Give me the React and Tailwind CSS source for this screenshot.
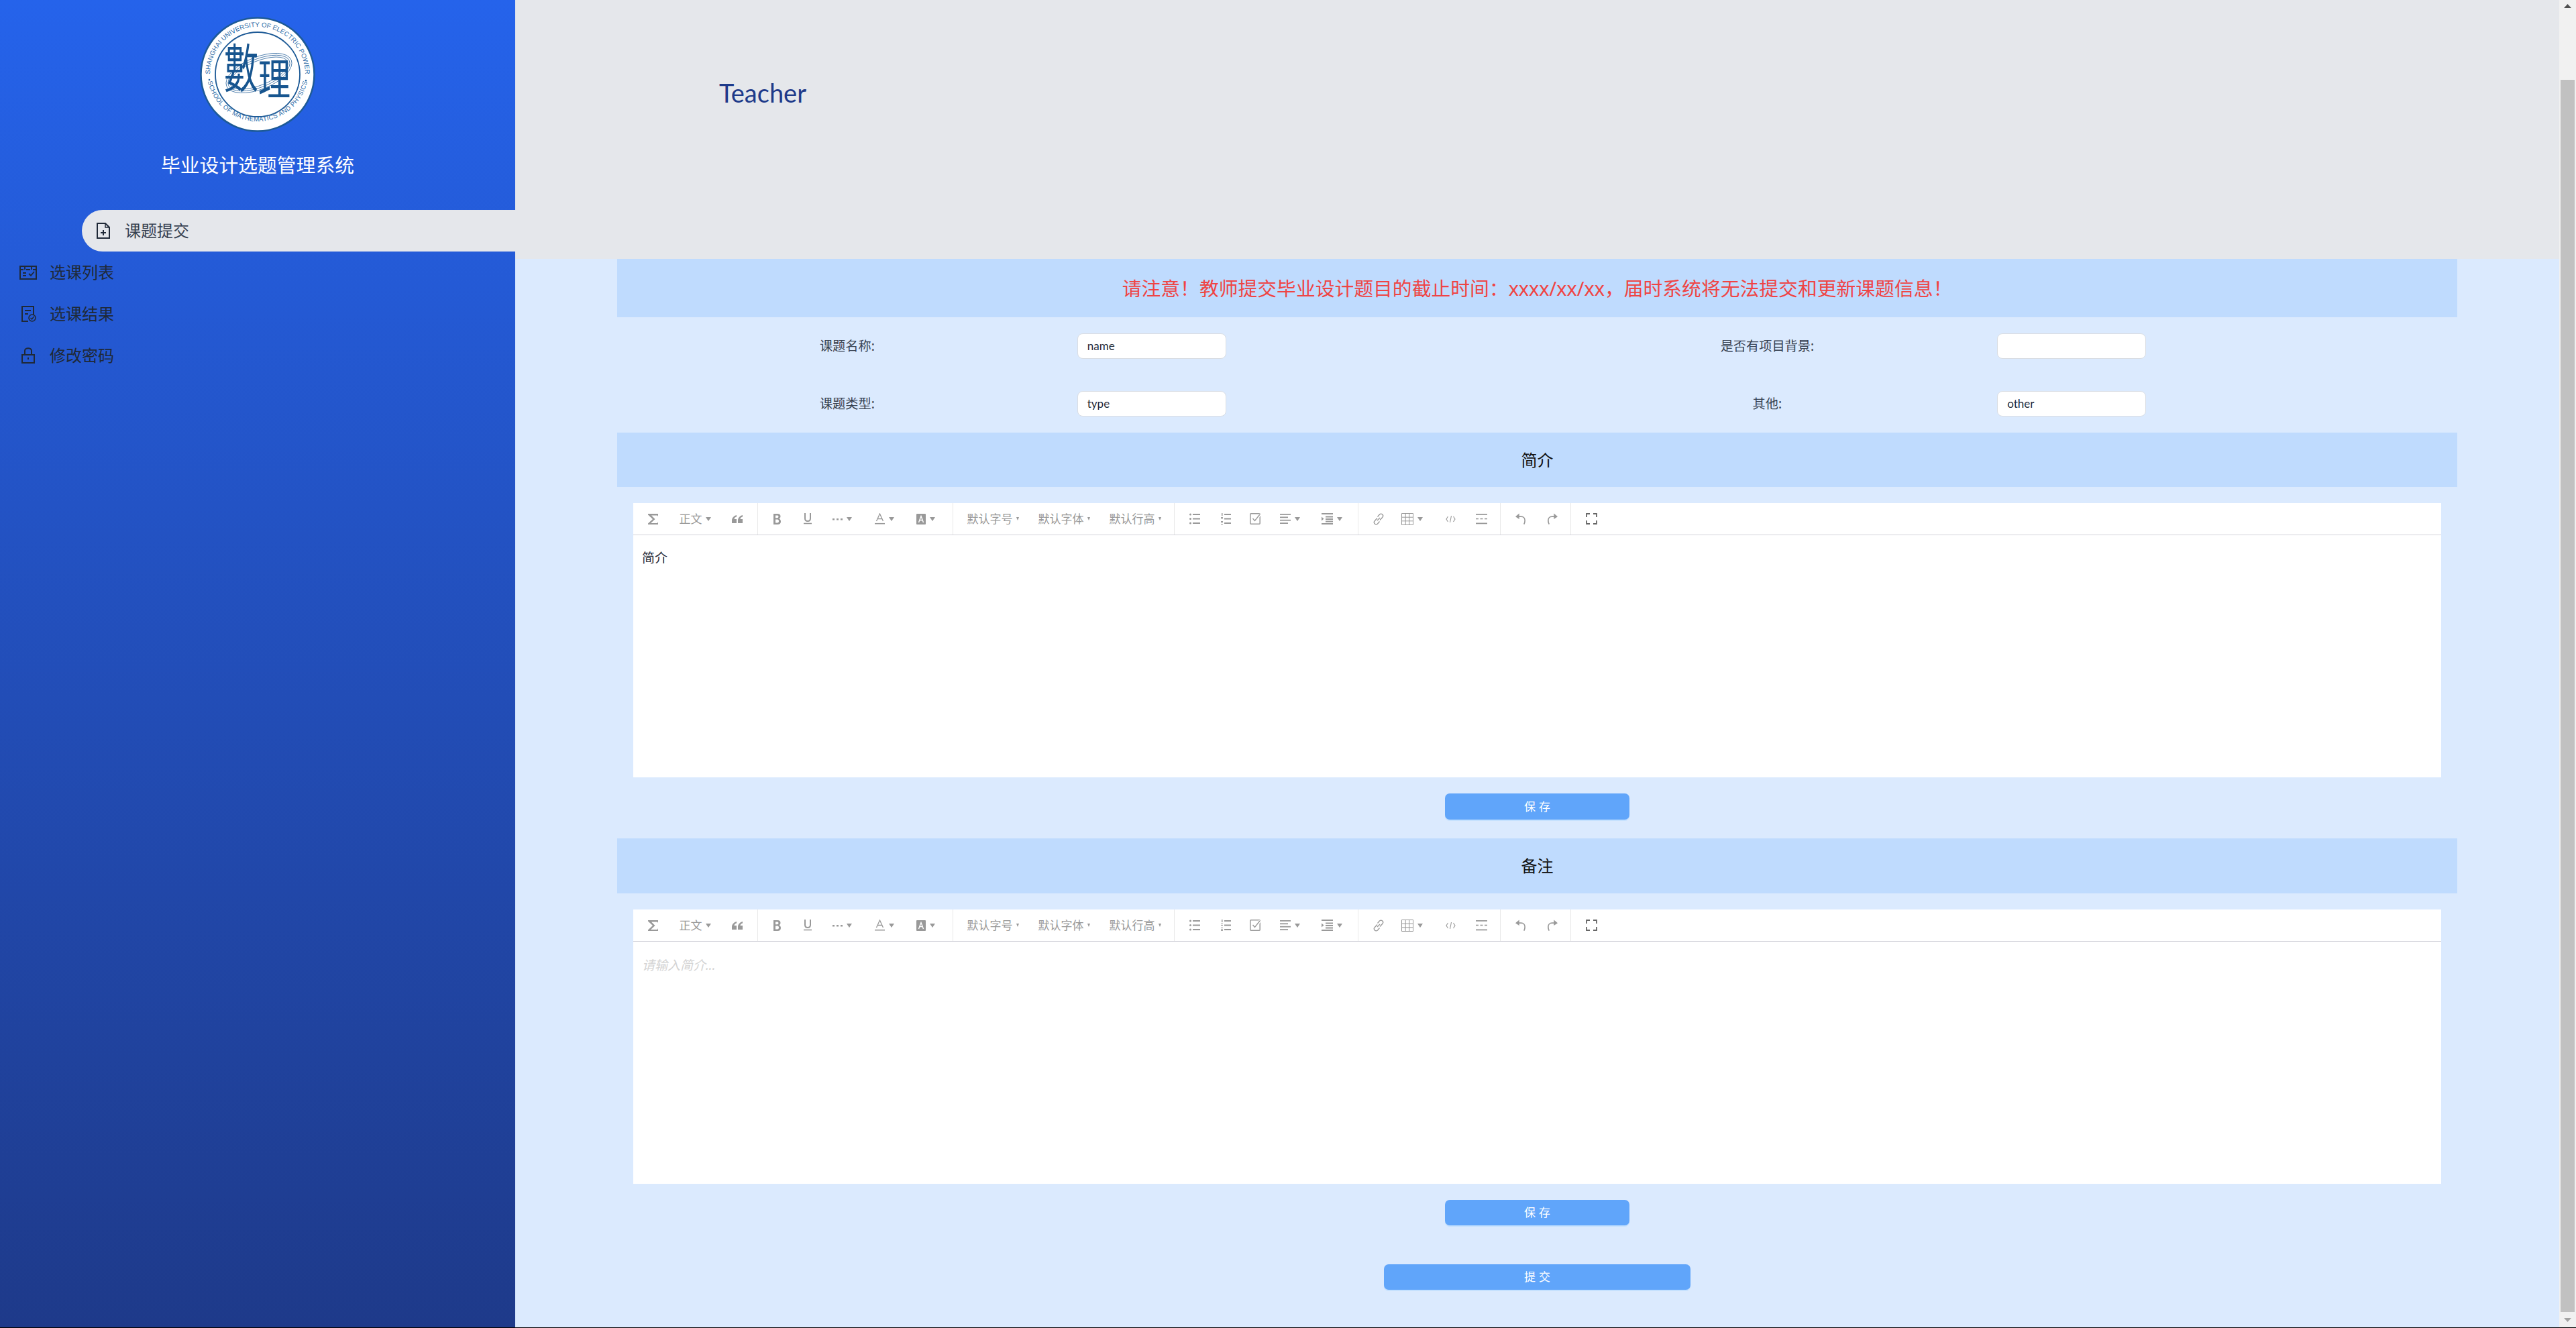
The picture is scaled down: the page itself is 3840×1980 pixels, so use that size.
import React from "react";

const FONT = "font-['Noto_Sans','Noto_Sans_CJK_SC',sans-serif]";

const Ic = ({ children, w = 18, h = 18, vb = "0 0 18 18" }) => (
  <svg width={w} height={h} viewBox={vb} fill="none" className="shrink-0">{children}</svg>
);
const Arrow = ({ small }) => (
  <svg width={small ? 4 : 8} height={small ? 5 : 6} viewBox="0 0 8 6" className="shrink-0" preserveAspectRatio="none"><path d="M0 0h8L4 6z" fill="#999" /></svg>
);
const C = "#999";

const Sigma = () => <Ic><path d="M1 1h15v4l-1-1.500H6l5.500 5.500L5 15h10l1-2v4H1v-1.500L8 9 1 2.500z" fill={C} /></Ic>;
const Quote = () => <Ic w={16} h={14} vb="0 0 16 14"><path d="M7 1C3 2 0 5 0 9v4h7V7H3.500C3.500 5 5 4 7 3.500zM16 1c-4 1-7 4-7 8v4h7V7h-3.500c0-2 1.500-3 3.500-3.500z" fill={C} /></Ic>;
const Bold = () => <Ic w={11} h={16} vb="0 0 11 16"><path d="M0 0h6c3 0 4.500 1.500 4.500 4 0 1.500-.8 2.800-2 3.400C10 8 11 9.500 11 11.500 11 14.500 9 16 6 16H0zM3 2.500v3.700h2.500c1.200 0 2-.7 2-1.900S6.700 2.500 5.500 2.500zM3 8.500v5h3c1.300 0 2-.9 2-2.500S7.300 8.500 6 8.500z" fill={C} fillRule="evenodd" /></Ic>;
const Under = () => <Ic w={12} h={17} vb="0 0 12 17"><path d="M2 0v8c0 2.500 1.500 4 4 4s4-1.500 4-4V0" stroke={C} strokeWidth="2" /><path d="M0 15.500h12" stroke={C} strokeWidth="1.600" /></Ic>;
const More = () => <Ic w={15} h={4} vb="0 0 15 4"><g fill={C}><rect y="1" width="3" height="2.500" /><rect x="6" y="1" width="3" height="2.500" /><rect x="12" y="1" width="3" height="2.500" /></g></Ic>;
const FontA = () => <Ic w={15} h={17} vb="0 0 15 17"><path d="M2.500 12L7.500 1l5 11M4.500 8.500h6" stroke={C} strokeWidth="1.300" /><path d="M0 15.700h15" stroke={C} strokeWidth="1.600" /></Ic>;
const BoxA = () => <Ic w={14} h={16} vb="0 0 14 16"><rect width="14" height="16" rx="1" fill={C} /><path d="M3.500 13L7 3.500 10.500 13M5 9.500h4" stroke="#fff" strokeWidth="1.400" /></Ic>;
const Ul = () => <Ic w={16} h={17} vb="0 0 16 17"><g fill={C}><circle cx="1.500" cy="2" r="1.500" /><circle cx="1.500" cy="8.500" r="1.500" /><circle cx="1.500" cy="15" r="1.500" /><rect x="5" y="1" width="11" height="2" /><rect x="5" y="7.500" width="11" height="2" /><rect x="5" y="14" width="11" height="2" /></g></Ic>;
const Ol = () => <Ic w={15} h={17} vb="0 0 15 17"><g fill={C}><rect x="1" width="1.500" height="4" /><rect y="6" width="3" height="1" /><rect y="8" width="3" height="1" /><rect y="12" width="3" height="1" /><rect y="14" width="3" height="1" /><rect y="16" width="3" height="1" /><rect x="5" y="1" width="10" height="2" /><rect x="5" y="7.500" width="10" height="2" /><rect x="5" y="14" width="10" height="2" /></g></Ic>;
const Todo = () => <Ic w={16} h={17} vb="0 0 16 17"><rect x=".8" y=".8" width="14.400" height="15.400" rx="1" stroke={C} strokeWidth="1.500" /><path d="M4.500 8l3 3.500L15.500 2" stroke="#fff" strokeWidth="3.500" /><path d="M4.500 8l3 3.500L15 2" stroke={C} strokeWidth="1.400" /></Ic>;
const Align = () => <Ic w={16} h={15} vb="0 0 16 15"><g fill={C}><rect width="16" height="1.800" /><rect y="4.400" width="12" height="1.800" /><rect y="8.800" width="16" height="1.800" /><rect y="13.200" width="12" height="1.800" /></g></Ic>;
const Indent = () => <Ic w={17} h={17} vb="0 0 17 17"><g fill={C}><rect width="17" height="2" /><rect x="6" y="4.500" width="11" height="2" /><rect x="6" y="8" width="11" height="2" /><rect x="6" y="11.500" width="11" height="2" /><rect y="15" width="17" height="2" /><path d="M0 5.500l3.500 3-3.500 3z" /></g></Ic>;
const Link = () => <Ic w={18} h={18}><g stroke={C} strokeWidth="1.300"><path d="M7.500 5.500l3-3.500c1.200-1.200 3-1.200 4.200 0s1.300 3 .1 4.200L11 10.500" /><path d="M10.500 12.500l-3 3.500c-1.200 1.200-3 1.200-4.200 0s-1.300-3-.1-4.200L7 7.500" /><path d="M7 11l4-4" /></g></Ic>;
const Table = () => <Ic w={18} h={18}><path d="M.5.500h17v17H.5zM.5 6.200h17M.5 11.800h17M6.200.5v17M11.800.5v17" stroke={C} /></Ic>;
const Code = () => <Ic w={15} h={12} vb="0 0 15 12"><path d="M3.500 2L1 6l2.500 4M11.500 2L14 6l-2.500 4M8.500 1L6.500 11" stroke={C} strokeWidth="1.100" /></Ic>;
const Hr = () => <Ic w={17} h={17} vb="0 0 17 17"><g fill={C}><rect y="1" width="17" height="1.800" /><rect y="14.500" width="17" height="1.800" /><rect y="7.700" width="4" height="1.600" /><rect x="6.500" y="7.700" width="4" height="1.600" /><rect x="13" y="7.700" width="4" height="1.600" /></g></Ic>;
const Undo = () => <Ic w={17} h={18}><path d="M3 5h6c3.500 0 6 2.500 6 6 0 2.500-.5 4-1.500 6" stroke={C} strokeWidth="1.800" /><path d="M0 5l6-5v9z" fill={C} /></Ic>;
const Redo = () => <Ic w={17} h={18}><path d="M15 5H9C5.500 5 3 7.500 3 11c0 2.500.5 4 1.500 6" stroke={C} strokeWidth="1.800" /><path d="M18 5l-6-5v9z" fill={C} /></Ic>;
const Full = () => <Ic w={17} h={17} vb="0 0 17 17"><path d="M1 6V1h5M11 1h5v5M16 11v5h-5M6 16H1v-5" stroke="#666" strokeWidth="1.800" /></Ic>;

const Lbl = ({ t, small }) => (
  <span className="flex items-center gap-[5px] text-[17px] leading-none text-[#999]">{t}<Arrow small={small} /></span>
);
const WithArrow = ({ children }) => <span className="flex items-center gap-[6px]">{children}<Arrow /></span>;

const row = [
  { w: 186, items: [[60, <Sigma />], [64, <Lbl t="正文" />], [62, <Quote />]] },
  { w: 291, items: [[56, <Bold />], [35, <Under />], [68, <WithArrow><More /></WithArrow>], [58, <WithArrow><FontA /></WithArrow>], [66, <WithArrow><BoxA /></WithArrow>]] },
  { w: 330, items: [[106, <Lbl t="默认字号" small />], [106, <Lbl t="默认字体" small />], [106, <Lbl t="默认行高" small />]], pl: "pl-[6px]" },
  { w: 274, items: [[60, <Ul />], [32, <Ol />], [56, <Todo />], [48, <WithArrow><Align /></WithArrow>], [76, <WithArrow><Indent /></WithArrow>]] },
  { w: 212, items: [[60, <Link />], [40, <WithArrow><Table /></WithArrow>], [75, <Code />], [17, <Hr />]] },
  { w: 105, items: [[61, <Undo />], [30, <Redo />]] },
  { w: 60, items: [[60, <Full />]], last: true },
];

const Toolbar = () => (
  <div className="flex h-[48px] border-b border-[#d1d1d9] bg-white">
    {row.map((g, i) => (
      <div key={i} style={{ width: g.w }} className={`flex shrink-0 items-center ${g.pl || ""} ${g.last ? "" : "border-r border-[#e8e8e8]"}`}>
        {g.items.map(([w, el], j) => (
          <div key={j} style={{ width: w }} className="flex shrink-0 items-center justify-center">{el}</div>
        ))}
      </div>
    ))}
  </div>
);

const Editor = ({ children, placeholder }) => (
  <div className="mx-6 h-[409px] bg-white">
    <Toolbar />
    <div className={`px-[13px] pt-[20px] text-[19px] leading-[28px] ${placeholder ? "pt-[21px] italic text-[#d4d4d4]" : "text-[#1f2937]"}`}>{children}</div>
  </div>
);

const SectionHead = ({ children, h }) => (
  <div className={`flex items-center justify-center bg-[#bfdbfe] text-[24px] text-[#111] ${h}`}>{children}</div>
);

const Btn = ({ w, h, children }) => (
  <button className={`flex items-center justify-center rounded-[7px] bg-[#60a5fa] pl-[5px] text-[17px] tracking-[5px] text-white shadow-[0_2px_0_rgba(5,145,255,0.1)] ${w} ${h}`}>{children}</button>
);

const Field = ({ label, value }) => (
  <>
    <div className="flex items-center justify-center text-[19.2px] text-[#374151]">{label}</div>
    <div className="flex items-center">
      <div className="flex h-[38px] w-[222px] items-center rounded-[8px] border border-[#d9dde3] bg-white px-[14px] font-['Lato',sans-serif] text-[17px] text-[#1f2937]">{value}</div>
    </div>
  </>
);

const Logo = () => (
  <svg width="172" height="172" viewBox="0 0 172 172" className="block">
    <defs>
      <path id="arcTop" d="M15 86A71 71 0 0 1 157 86" />
      <path id="arcBot" d="M10 80A76 76 0 0 0 162 80" />
    </defs>
    <circle cx="86" cy="86" r="84.500" fill="#fff" stroke="#1d5a96" strokeWidth="2.500" />
    <circle cx="86" cy="86" r="63" fill="none" stroke="#1d5a96" strokeWidth="1.800" />
    <text fontFamily="'Liberation Sans',sans-serif" fontSize="9.800" fill="#2a6aa6">
      <textPath href="#arcTop" startOffset="50%" textAnchor="middle" textLength="222">SHANGHAI UNIVERSITY OF ELECTRIC POWER</textPath>
    </text>
    <text fontFamily="'Liberation Sans',sans-serif" fontSize="9.500" fill="#2a6aa6">
      <textPath href="#arcBot" startOffset="50%" textAnchor="middle" textLength="205">SCHOOL OF MATHEMATICS AND PHYSICS</textPath>
    </text>
    <circle cx="14" cy="94" r="1.300" fill="#2a6aa6" />
    <circle cx="158" cy="95" r="1.300" fill="#2a6aa6" />
    <g fill="none" stroke="#1d5a96" strokeWidth="0.700">
      <ellipse cx="88" cy="84" rx="52" ry="24" transform="rotate(-22 88 84)" />
      <ellipse cx="88" cy="84" rx="49" ry="21" transform="rotate(-22 88 84)" />
      <ellipse cx="88" cy="84" rx="46" ry="18" transform="rotate(-22 88 84)" />
    </g>
    <text transform="translate(36 106) scale(0.98 1.5)" fontFamily="'Noto Sans CJK TC',sans-serif" fontSize="52" fill="#17558f">數</text>
    <text transform="translate(87 116) scale(1 1.33)" fontFamily="'Noto Sans CJK TC',sans-serif" fontSize="48" fill="#17558f">理</text>
  </svg>
);

const NavIcon = ({ children }) => (
  <svg width="26" height="24" viewBox="0 0 26 24" fill="none" stroke="#1f2937" strokeWidth="2" className="shrink-0">{children}</svg>
);

const NavItem = ({ icon, children, active }) => (
  <div className={`flex h-[62px] items-center text-[24px] ${active ? "ml-[122px] rounded-l-full bg-[#e5e7eb] pl-[19px] text-[#374151]" : "pl-[29px] text-[#1f2937]"}`}>
    <span className="flex w-[26px] justify-center">{icon}</span>
    <span className="ml-[19px]">{children}</span>
  </div>
);

export default function App() {
  return (
    <div className={`flex h-[1980px] flex-col overflow-hidden ${FONT}`}>
      <div className="flex min-h-0 flex-1">
        <aside className="flex w-[768px] shrink-0 flex-col bg-gradient-to-b from-[#2563eb] to-[#1e3a8a]">
          <div className="flex justify-center pt-[25px]"><Logo /></div>
          <div className="mt-[29px] text-center text-[28.8px] leading-[40px] text-white">毕业设计选题管理系统</div>
          <nav className="mt-[47px]">
            <NavItem active icon={
              <NavIcon><path d="M4 1h12l6 6v16H4z" /><path d="M16 1v6h6" strokeWidth="1.500" /><path d="M13 11v8M9 15h8" /></NavIcon>
            }>课题提交</NavItem>
            <NavItem icon={
              <NavIcon><path d="M1 3h24v19H1z" /><path d="M8 3v5M18 3v5M1 8h5M10 8h6M20 8h5" strokeWidth="1.800" /><path d="M5 13h5M5 17h5M14 14l3 3 5-6" strokeWidth="1.800" /></NavIcon>
            }>选课列表</NavItem>
            <NavItem icon={
              <NavIcon><path d="M13 23H4V1h17v12" /><path d="M8 7h9M8 12h5" /><circle cx="19" cy="18" r="5" strokeWidth="1.600" /><path d="M16.500 18l2 2 3-4" strokeWidth="1.400" /></NavIcon>
            }>选课结果</NavItem>
            <NavItem icon={
              <NavIcon><path d="M4 11h18v12H4zM8 11V5c0-5 10-5 10 0v6" /><path d="M13 15v3" /></NavIcon>
            }>修改密码</NavItem>
          </nav>
        </aside>

        <main className="flex min-w-0 flex-1 flex-col bg-[#dbeafe]">
          <header className="h-[386px] shrink-0 bg-[#e5e7eb] pl-[304px] pt-[112px] font-['Lato',sans-serif] text-[38px] leading-[52px] text-[#1e3a8a]">Teacher</header>
          <div className="flex flex-1 flex-col px-[152px]">
            <div className="flex h-[87px] items-center justify-center bg-[#bfdbfe] text-[28.8px] text-[#ef4444]">请注意！教师提交毕业设计题目的截止时间：xxxx/xx/xx，届时系统将无法提交和更新课题信息！</div>
            <div className="grid grid-cols-4 grid-rows-[86px_86px]">
              <Field label="课题名称:" value="name" />
              <Field label="是否有项目背景:" value="" />
              <Field label="课题类型:" value="type" />
              <Field label="其他:" value="other" />
            </div>
            <SectionHead h="h-[81px]">简介</SectionHead>
            <div className="pt-6"><Editor>简介</Editor></div>
            <div className="flex justify-center pb-[28px] pt-[24px]"><Btn w="w-[275px]" h="h-[39px]">保存</Btn></div>
            <SectionHead h="h-[82px]">备注</SectionHead>
            <div className="pt-6"><Editor placeholder>请输入简介...</Editor></div>
            <div className="flex justify-center pt-[24px]"><Btn w="w-[275px]" h="h-[38px]">保存</Btn></div>
            <div className="flex justify-center pt-[58px]"><Btn w="w-[457px]" h="h-[38px]">提交</Btn></div>
          </div>
        </main>

        <div className="flex w-[25px] shrink-0 flex-col bg-[#f1f1f1]">
          <div className="flex h-[119px] justify-center pt-[6px]"><svg width="11" height="6" viewBox="0 0 11 6"><path d="M5.500 0L11 6H0z" fill="#505050" /></svg></div>
          <div className="mx-[2px] flex-1 bg-[#c1c1c1]" />
          <div className="flex h-[23px] justify-center pt-[9px]"><svg width="11" height="6" viewBox="0 0 11 6"><path d="M5.500 6L11 0H0z" fill="#a3a3a3" /></svg></div>
        </div>
      </div>
      <div className="h-px shrink-0 bg-black" />
    </div>
  );
}
